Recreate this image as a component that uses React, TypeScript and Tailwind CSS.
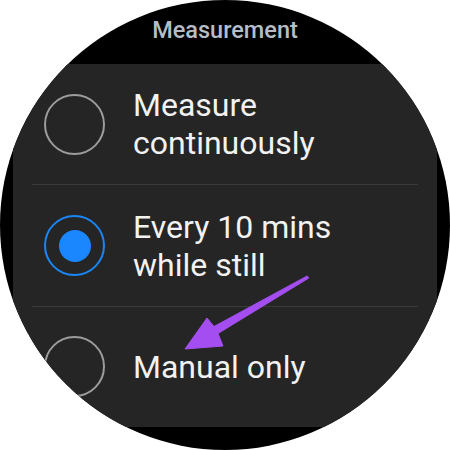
import React from "react";

function Radio({ selected }: { selected?: boolean }) {
  if (selected) {
    return (
      <div className="w-[61px] h-[61px] shrink-0 rounded-full border-[2px] border-[#1a86f5] flex items-center justify-center">
        <div className="w-[32px] h-[32px] rounded-full bg-[#1a86ff]" />
      </div>
    );
  }
  return <div className="w-[61px] h-[61px] shrink-0 rounded-full border-[2px] border-[#9c9c9c]" />;
}

function Row({ lines, selected }: { lines: string[]; selected?: boolean }) {
  return (
    <div className="h-[121px] flex items-center pl-[31px] gap-[28px]">
      <Radio selected={selected} />
      <div className="text-[32px] leading-[38px] text-[#f2f2f2]">
        {lines.map((l) => (
          <div key={l}>{l}</div>
        ))}
      </div>
    </div>
  );
}

export default function App() {
  return (
    <div
      className="w-[450px] h-[450px] bg-white relative"
      style={{ fontFamily: "Roboto, 'Noto Sans', sans-serif" }}
    >
      <div className="w-[450px] h-[450px] rounded-full overflow-hidden bg-black flex flex-col">
        <div className="h-[64px] shrink-0 flex items-center justify-center pb-[2px]">
          <span className="text-[23.5px] font-medium text-[#b5bdc6]">Measurement</span>
        </div>
        <div className="mx-[13px] h-[363px] bg-[#252525] flex flex-col">
          <Row lines={["Measure", "continuously"]} />
          <div className="mx-[19px] h-px bg-[#3a3a3a]" />
          <Row lines={["Every 10 mins", "while still"]} selected />
          <div className="mx-[19px] h-px bg-[#3a3a3a]" />
          <Row lines={["Manual only"]} />
        </div>
      </div>
      <svg className="absolute left-0 top-0" width="450" height="450" viewBox="0 0 450 450">
        <polygon
          points="307.3,275.9 214,326.5 207,318 185,349 223,346 218,333.5 308.7,278.1"
          fill="#a44ef2"
          stroke="#a44ef2"
          strokeWidth="1"
          strokeLinejoin="round"
        />
      </svg>
    </div>
  );
}
